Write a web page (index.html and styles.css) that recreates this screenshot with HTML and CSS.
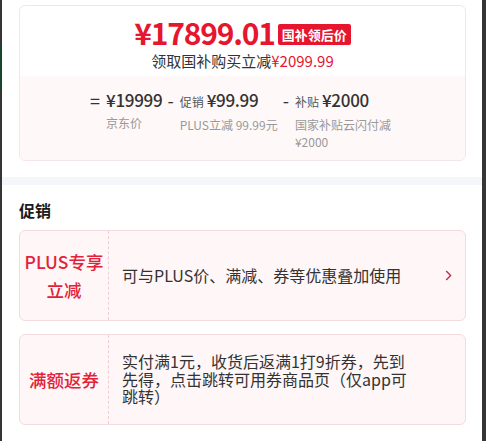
FILE: index.html
```html
<!DOCTYPE html>
<html lang="zh-CN">
<head>
  <meta charset="UTF-8" />
  <meta name="viewport" content="width=device-width, initial-scale=1.0"/>
  <title>商品优惠</title>
  <link rel="stylesheet" href="styles.css">
</head>
<body>
  <div class="sheet">
    <div class="price-card">
      <div class="price-top">
        <div class="final">
          <span class="final-num">¥17899.01</span>
          <span class="tag">国补领后价</span>
        </div>
        <div class="save">领取国补购买立减<span class="red">¥2099.99</span></div>
      </div>
      <div class="calc">
        <div class="calc-item">
          <span class="sym">=</span>
          <div class="col">
            <div class="val">¥19999</div>
            <div class="desc">京东价</div>
          </div>
        </div>
        <div class="calc-item">
          <span class="sym">-</span>
          <div class="col">
            <div class="val"><span class="lbl">促销</span>¥99.99</div>
            <div class="desc">PLUS立减 99.99元</div>
          </div>
        </div>
        <div class="calc-item">
          <span class="sym">-</span>
          <div class="col">
            <div class="val"><span class="lbl">补贴</span>¥2000</div>
            <div class="desc">国家补贴云闪付减¥2000</div>
          </div>
        </div>
      </div>
    </div>

    <div class="band"></div>

    <div class="promo">
      <h3>促销</h3>
      <div class="promo-card">
        <div class="promo-name">PLUS专享<br>立减</div>
        <div class="promo-body">
          <div class="promo-text">可与PLUS价、满减、券等优惠叠加使用</div>
          <svg class="arrow" width="7" height="11" viewBox="0 0 7 11">
            <polyline points="1.2,1 5.6,5.5 1.2,10" fill="none" stroke="#b8334f" stroke-width="1.4"/>
          </svg>
        </div>
      </div>
      <div class="promo-card">
        <div class="promo-name">满额返券</div>
        <div class="promo-body">
          <div class="promo-text">实付满1元，收货后返满1打9折券，先到先得，点击跳转可用券商品页（仅app可跳转）</div>
        </div>
      </div>
    </div>
  </div>
</body>
</html>
```

FILE: styles.css
```css
:root {
  --red: #e5162d;
  --text: #333;
  --grey: #999;
}

body {
  margin: 0;
  font-family: "Noto Sans CJK SC", sans-serif;
  color: var(--text);
  background: linear-gradient(#343434 0 45px, #17452c 45px 90px, #343434 90px) no-repeat 0 0 / 2px 100%, #363636;
}

.sheet {
  margin: 0 4px 0 2px;
  height: 441px;
  background: #fff;
  overflow: hidden;
  padding-top: 5px;
  box-sizing: border-box;
}

.price-card {
  margin: 0 16px 0 17px;
  border: 1px solid #f4e6e8;
  border-radius: 6px;
  overflow: hidden;
}

.price-top {
  height: 70px;
  text-align: center;
  box-sizing: border-box;
  padding-top: 8px;
}
.final {
  display: flex;
  justify-content: center;
  align-items: flex-end;
  height: 36px;
}
.final-num {
  color: var(--red);
  font-size: 30px;
  font-weight: 700;
  letter-spacing: -1.2px;
  line-height: 36px;
}
.tag {
  background: var(--red);
  color: #fff;
  font-size: 13px;
  font-weight: 700;
  line-height: 21px;
  padding: 0 4px;
  margin: 0 0 5px 3px;
  border-radius: 2px;
}
.save {
  font-size: 15px;
  line-height: 20px;
  margin-top: 1px;
}
.red { color: var(--red); }

.calc {
  background: #fff8f8;
  display: flex;
  justify-content: center;
  align-items: flex-start;
  gap: 5px;
  padding: 12px 0 10px;
}
.calc-item {
  display: flex;
  align-items: flex-start;
}
.sym {
  font-size: 18px;
  line-height: 24px;
  margin-right: 6px;
}
.col { max-width: 100px; }
.val {
  font-size: 17px;
  font-weight: 500;
  letter-spacing: -0.3px;
  line-height: 24px;
  white-space: nowrap;
}
.lbl {
  font-size: 12px;
  font-weight: 400;
  letter-spacing: 0;
  color: #555;
  margin-right: 3px;
}
.desc {
  font-size: 12px;
  line-height: 17px;
  color: var(--grey);
  margin-top: 2px;
}

.band {
  height: 8px;
  margin-top: 16px;
  background: #f4f6fa;
}

.promo { padding: 14px 16px 0 17px; }
.promo h3 {
  margin: 0 0 9px;
  font-size: 16px;
  font-weight: 700;
  line-height: 22px;
  color: #1a1a1a;
}
.promo-card {
  display: flex;
  height: 91px;
  box-sizing: border-box;
  border: 1px solid #f5dade;
  background: #fff6f7;
  border-radius: 6px;
  margin-bottom: 13px;
}
.promo-name {
  width: 88px;
  flex-shrink: 0;
  border-right: 1px dashed #efcdd3;
  display: flex;
  align-items: center;
  justify-content: center;
  text-align: center;
  color: #e3213a;
  font-size: 17.5px;
  font-weight: 500;
  line-height: 28px;
}
.promo-body {
  flex: 1;
  display: flex;
  align-items: center;
  padding: 0 13px;
}
.promo-text {
  width: 290px;
  font-size: 16px;
  line-height: 17.5px;
}
.arrow { margin-left: auto; }
```
